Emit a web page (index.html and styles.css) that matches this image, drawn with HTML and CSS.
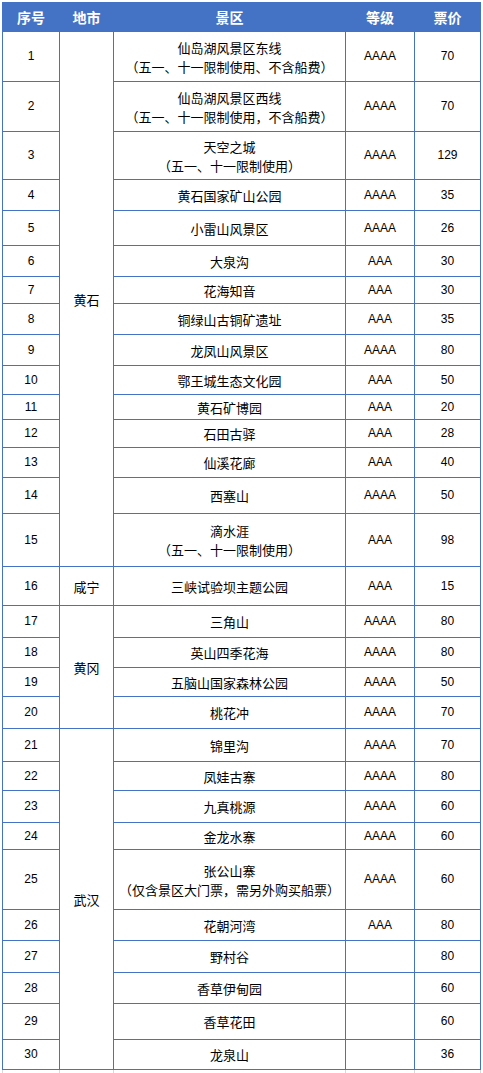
FILE: index.html
```html
<!DOCTYPE html>
<html lang="zh-CN">
<head>
<meta charset="utf-8">
<link rel="stylesheet" href="styles.css">
</head>
<body>
<div class="sheet">
<table class="tbl">
<colgroup>
<col class="c-no"><col class="c-city"><col class="c-name"><col class="c-level"><col class="c-price">
</colgroup>
<thead>
<tr class="h29"><th>序号</th><th>地市</th><th>景区</th><th>等级</th><th>票价</th></tr>
</thead>
<tbody>
<tr class="h50"><td class="num">1</td><td rowspan="15" class="city">黄石</td><td>仙岛湖风景区东线<br>（五一、十一限制使用、不含船费）</td><td class="num">AAAA</td><td class="num">70</td></tr>
<tr class="h50"><td class="num">2</td><td>仙岛湖风景区西线<br>（五一、十一限制使用，不含船费）</td><td class="num">AAAA</td><td class="num">70</td></tr>
<tr class="h48"><td class="num">3</td><td>天空之城<br>（五一、十一限制使用）</td><td class="num">AAAA</td><td class="num">129</td></tr>
<tr class="h31"><td class="num">4</td><td>黄石国家矿山公园</td><td class="num">AAAA</td><td class="num">35</td></tr>
<tr class="h35"><td class="num">5</td><td>小雷山风景区</td><td class="num">AAAA</td><td class="num">26</td></tr>
<tr class="h31"><td class="num">6</td><td>大泉沟</td><td class="num">AAA</td><td class="num">30</td></tr>
<tr class="h27"><td class="num">7</td><td>花海知音</td><td class="num">AAA</td><td class="num">30</td></tr>
<tr class="h31"><td class="num">8</td><td>铜绿山古铜矿遗址</td><td class="num">AAA</td><td class="num">35</td></tr>
<tr class="h31"><td class="num">9</td><td>龙凤山风景区</td><td class="num">AAAA</td><td class="num">80</td></tr>
<tr class="h29"><td class="num">10</td><td>鄂王城生态文化园</td><td class="num">AAA</td><td class="num">50</td></tr>
<tr class="h25"><td class="num">11</td><td>黄石矿博园</td><td class="num">AAA</td><td class="num">20</td></tr>
<tr class="h28"><td class="num">12</td><td>石田古驿</td><td class="num">AAA</td><td class="num">28</td></tr>
<tr class="h30"><td class="num">13</td><td>仙溪花廊</td><td class="num">AAA</td><td class="num">40</td></tr>
<tr class="h36"><td class="num">14</td><td>西塞山</td><td class="num">AAAA</td><td class="num">50</td></tr>
<tr class="h53"><td class="num">15</td><td>滴水涯<br>（五一、十一限制使用）</td><td class="num">AAA</td><td class="num">98</td></tr>
<tr class="h39"><td class="num">16</td><td class="city">咸宁</td><td>三峡试验坝主题公园</td><td class="num">AAA</td><td class="num">15</td></tr>
<tr class="h32"><td class="num">17</td><td rowspan="4" class="city">黄冈</td><td>三角山</td><td class="num">AAAA</td><td class="num">80</td></tr>
<tr class="h30"><td class="num">18</td><td>英山四季花海</td><td class="num">AAAA</td><td class="num">80</td></tr>
<tr class="h29"><td class="num">19</td><td>五脑山国家森林公园</td><td class="num">AAAA</td><td class="num">50</td></tr>
<tr class="h32"><td class="num">20</td><td>桃花冲</td><td class="num">AAAA</td><td class="num">70</td></tr>
<tr class="h33"><td class="num">21</td><td rowspan="10" class="city">武汉</td><td>锦里沟</td><td class="num">AAAA</td><td class="num">70</td></tr>
<tr class="h29"><td class="num">22</td><td>凤娃古寨</td><td class="num">AAAA</td><td class="num">80</td></tr>
<tr class="h32"><td class="num">23</td><td>九真桃源</td><td class="num">AAAA</td><td class="num">60</td></tr>
<tr class="h27"><td class="num">24</td><td>金龙水寨</td><td class="num">AAAA</td><td class="num">60</td></tr>
<tr class="h60"><td class="num">25</td><td>张公山寨<br>（仅含景区大门票，需另外购买船票）</td><td class="num">AAAA</td><td class="num">60</td></tr>
<tr class="h31"><td class="num">26</td><td>花朝河湾</td><td class="num">AAA</td><td class="num">80</td></tr>
<tr class="h32"><td class="num">27</td><td>野村谷</td><td class="num"></td><td class="num">80</td></tr>
<tr class="h31"><td class="num">28</td><td>香草伊甸园</td><td class="num"></td><td class="num">60</td></tr>
<tr class="h36"><td class="num">29</td><td>香草花田</td><td class="num"></td><td class="num">60</td></tr>
<tr class="h30"><td class="num">30</td><td>龙泉山</td><td class="num"></td><td class="num">36</td></tr>
<tr class="grid"><td></td><td></td><td></td><td></td><td></td></tr>
</tbody>
</table>
</div>
</body>
</html>
```

FILE: styles.css
```css
html, body {
  margin: 0;
  padding: 0;
  background: #ffffff;
}

.sheet {
  padding: 2px 0 0 2px;
}

.tbl {
  border-collapse: collapse;
  table-layout: fixed;
  width: 479px;
  font-family: "Noto Sans CJK SC", "Noto Sans", sans-serif;
  font-size: 13px;
  line-height: 19px;
  color: #000000;
}

.c-no { width: 57px; }
.c-city { width: 54px; }
.c-name { width: 232px; }
.c-level { width: 69px; }
.c-price { width: 66px; }

.tbl th,
.tbl td {
  padding: 0;
  text-align: center;
  vertical-align: middle;
  white-space: nowrap;
  overflow: hidden;
}

.tbl th {
  background: #4472c4;
  color: #ffffff;
  font-weight: bold;
  font-size: 14px;
  border: 1px solid #4472c4;
}

.tbl th + th {
  border-left-color: #ffffff;
}

.tbl td {
  border: 1px solid #4472c4;
}

.tbl td.num {
  font-family: "Liberation Sans", Arial, sans-serif;
  font-size: 12px;
  color: #000000;
}

.tbl td.city {
  font-size: 13px;
}

.tbl tr.grid td {
  height: 3px;
  border-color: #d9d9d9;
  border-bottom: none;
}

.h25 { height: 25px; }
.h27 { height: 27px; }
.h28 { height: 28px; }
.h29 { height: 29px; }
.h30 { height: 30px; }
.h31 { height: 31px; }
.h32 { height: 32px; }
.h33 { height: 33px; }
.h35 { height: 35px; }
.h36 { height: 36px; }
.h39 { height: 39px; }
.h48 { height: 48px; }
.h50 { height: 50px; }
.h53 { height: 53px; }
.h60 { height: 60px; }
```
